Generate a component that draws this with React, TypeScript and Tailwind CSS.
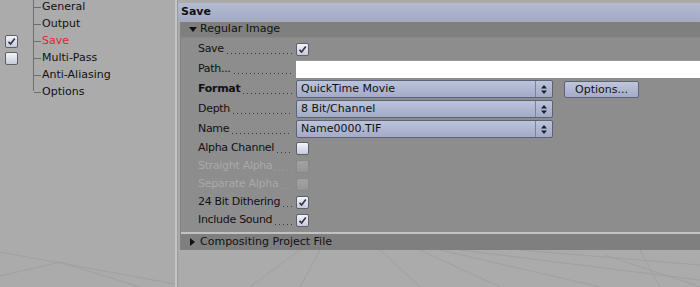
import React from "react";

const font = "font-['DejaVu_Sans','Liberation_Sans',sans-serif]";

const tree = ["General", "Output", "Save", "Multi-Pass", "Anti-Aliasing", "Options"];

function Check({ checked, disabled }: { checked?: boolean; disabled?: boolean }) {
  return (
    <div
      className={`w-[13px] h-[13px] rounded-[2px] border flex items-center justify-center ${
        disabled
          ? "border-[#888] bg-gradient-to-b from-[#a2a2a2] to-[#969696]"
          : "border-[#5c5f6c] bg-gradient-to-b from-[#f4f5fa] to-[#c6cad8]"
      }`}
    >
      {checked && (
        <svg width="9" height="9" viewBox="0 0 9 9">
          <path d="M1.5 4.8 L3.6 7 L7.8 1.6" fill="none" stroke="#2f3445" strokeWidth="1.7" />
        </svg>
      )}
    </div>
  );
}

function Select({ value }: { value: string }) {
  return (
    <div className="w-[257px] h-[18px] flex rounded-[2px] border border-[#5d6275] bg-gradient-to-b from-[#bcc3dc] to-[#a3abc6] text-[#111]">
      <div className="flex-1 pl-[4px] leading-[16px]">{value}</div>
      <div className="w-[17px] border-l border-[#7d8298] flex items-center justify-center">
        <svg width="6" height="9" viewBox="0 0 6 9">
          <path d="M0 3.5 L3 0 L6 3.5 Z M0 5.5 L3 9 L6 5.5 Z" fill="#1c1f2a" />
        </svg>
      </div>
    </div>
  );
}

function Row({
  label,
  bold,
  dim,
  h = "h-[18px]",
  children,
}: {
  label: string;
  bold?: boolean;
  dim?: boolean;
  h?: string;
  children?: React.ReactNode;
}) {
  return (
    <div className={`flex items-center ${h}`}>
      <div className={`w-[98px] flex items-end whitespace-nowrap ${dim ? "text-[#a9a9a9]" : "text-[#111]"}`}>
        <span className={`tracking-[-0.3px] ${bold ? "font-bold" : ""}`}>{label}</span>
        <span
          className={`flex-1 ml-[3px] mr-[4px] mb-[3px] h-px bg-[length:4px_1px] bg-repeat-x ${
            dim
              ? "bg-[linear-gradient(to_right,#a0a0a0_1px,transparent_1px)]"
              : "bg-[linear-gradient(to_right,#3a3a3a_1px,transparent_1px)]"
          }`}
        />
      </div>
      <div className="flex-1 flex items-center">{children}</div>
    </div>
  );
}

export default function App() {
  return (
    <div className={`relative w-[700px] h-[287px] flex bg-[#ababab] overflow-hidden text-[11px] ${font}`}>
      <svg className="absolute left-0 top-0 pointer-events-none" width="700" height="287" viewBox="0 0 700 287">
        <g stroke="#9c9c9c" strokeWidth="1" fill="none" opacity="0.7">
          <path d="M0 252 L175 284" />
          <path d="M0 276 L60 262 L140 287" />
          <path d="M300 250 L250 287" />
          <path d="M320 250 L300 287" />
          <path d="M380 250 L420 287" />
          <path d="M420 250 L500 287" />
          <path d="M440 250 L600 287" />
          <path d="M460 250 L700 280" />
          <path d="M520 250 L700 265" />
          <path d="M640 250 L660 287" />
          <path d="M605 255 L700 287" />
        </g>
      </svg>

      {/* tree */}
      <div className="relative w-[175px] shrink-0">
        <div className="absolute left-[33px] top-0 w-px h-[91px] bg-[#6e6e6e]" />
        <div className="flex flex-col -mt-[1px]">
          {tree.map((t, i) => (
            <div key={t} className="flex items-center h-[17px]">
              <div className="w-[33px] flex justify-center pr-[10px]">
                {i === 2 && <Check checked />}
                {i === 3 && <Check />}
              </div>
              <div className="w-[7px] h-px bg-[#6e6e6e] ml-px" />
              <span className={`pl-[1px] ${t === "Save" ? "text-[#e0262b]" : "text-[#111]"}`}>{t}</span>
            </div>
          ))}
        </div>
      </div>

      <div className="w-[3px] shrink-0 bg-[#c6c6c6] border-r border-[#999]" />

      {/* settings */}
      <div className="relative flex-1 flex flex-col pt-[3px]">
        <div className="h-[18px] bg-gradient-to-b from-[#b4bbd2] to-[#a3abc4] pl-[3px] font-bold leading-[18px] text-[#111]">
          Save
        </div>
        <div className="ml-[2px] mt-[1px] flex flex-col bg-[#8d8d8d] border-l border-[#808080]">
          <div className="h-[16px] bg-[#7f7f7f] flex items-center pl-[8px] text-[#111] border-b border-[#888]">
            <svg width="8" height="6" viewBox="0 0 8 6" className="mr-[3px]">
              <path d="M0 0 L8 0 L4 5 Z" fill="#111" />
            </svg>
            Regular Image
          </div>
          <div className="flex flex-col pl-[17px] pt-[1px]">
            <Row label="Save" h="h-[20px]">
              <Check checked />
            </Row>
            <Row label="Path..." h="h-[20px]">
              <div className="w-full h-[18px] bg-white border-t border-[#999]" />
            </Row>
            <Row label="Format" bold h="h-[20px]">
              <Select value="QuickTime Movie" />
              <div className="ml-[11px] w-[75px] h-[17px] rounded-[2px] border border-[#5d6275] bg-gradient-to-b from-[#c0c6de] to-[#a3abc6] text-center leading-[15px] text-[#111]">
                Options...
              </div>
            </Row>
            <Row label="Depth" h="h-[20px]">
              <Select value="8 Bit/Channel" />
            </Row>
            <Row label="Name" h="h-[20px]">
              <Select value="Name0000.TIF" />
            </Row>
            <Row label="Alpha Channel">
              <Check />
            </Row>
            <Row label="Straight Alpha" dim>
              <Check disabled />
            </Row>
            <Row label="Separate Alpha" dim>
              <Check disabled />
            </Row>
            <Row label="24 Bit Dithering">
              <Check checked />
            </Row>
            <Row label="Include Sound">
              <Check checked />
            </Row>
          </div>
          <div className="h-[3px] bg-[#8d8d8d]" />
          <div className="h-[2px] bg-[#c2c2c2]" />
          <div className="h-[16px] bg-[#7f7f7f] flex items-center pl-[9px] text-[#111]">
            <svg width="6" height="8" viewBox="0 0 6 8" className="mr-[4px]">
              <path d="M0 0 L5 4 L0 8 Z" fill="#111" />
            </svg>
            Compositing Project File
          </div>
        </div>
      </div>
    </div>
  );
}
